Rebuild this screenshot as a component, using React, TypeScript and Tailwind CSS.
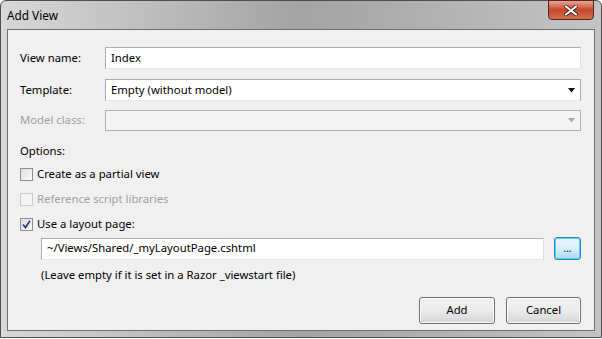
import React from "react";

const font = { fontFamily: '"Noto Sans", "Open Sans", sans-serif' };

function Arrow({ disabled }: { disabled?: boolean }) {
  return (
    <svg width="8" height="5" viewBox="0 0 8 5" className="mr-[4px]">
      <path d="M0 0 H7 L3.5 4.5 Z" fill={disabled ? "#a8a8a8" : "#111"} />
    </svg>
  );
}

function Check({ checked, disabled, label }: { checked?: boolean; disabled?: boolean; label: string }) {
  return (
    <div className="flex items-center h-[13px]">
      <div
        className={
          "w-[13px] h-[13px] border flex items-center justify-center " +
          (disabled ? "border-[#cbcbcb] bg-[#f4f4f4]" : "border-[#8e8f8f] bg-gradient-to-br from-[#dcdcdc] to-[#fbfbfb]")
        }
      >
        {checked && (
          <svg width="9" height="9" viewBox="0 0 9 9">
            <path d="M1 4.5 L3.5 7.5 L8 0.8" stroke="#2a3c8c" strokeWidth="1.8" fill="none" />
          </svg>
        )}
      </div>
      <span className={"ml-[4px] " + (disabled ? "text-[#a0a0a0]" : "text-black")}>{label}</span>
    </div>
  );
}

function Btn({ children, focus, w }: { children: React.ReactNode; focus?: boolean; w: string }) {
  return (
    <div
      className={
        "h-full rounded-[3px] border flex items-center justify-center text-black " +
        w +
        (focus
          ? " border-[#3c7fb1] shadow-[inset_0_0_0_1px_#48d7fb] bg-gradient-to-b from-[#eaf6fd] via-[#d9f0fc] to-[#a7d9f5]"
          : " border-[#707070] bg-gradient-to-b from-[#f2f2f2] via-[#ebebeb] to-[#d5d5d5] shadow-[inset_0_0_0_1px_#fcfcfc]")
      }
    >
      {children}
    </div>
  );
}

export default function App() {
  return (
    <div className="w-[602px] h-[339px] bg-white text-[11.3px]" style={font}>
      <div className="w-[602px] h-[338px] rounded-t-[6px] border border-[#4f4f4f] bg-gradient-to-r from-[#d8d8d8] via-[#a3a3a3] to-[#c4c4c4] flex flex-col">
        {/* title bar */}
        <div className="h-[28px] flex items-start justify-between">
          <div className="pl-[6px] pt-[6px] text-[11.8px] text-black">Add View</div>
          <div className="mr-[7px] mt-[-1px] w-[46px] h-[20px] rounded-b-[4px] border border-[#5a2520] bg-gradient-to-b from-[#e8a493] via-[#c7452c] to-[#d2704f] flex items-center justify-center">
            <svg width="14" height="11" viewBox="0 0 14 11">
              <path d="M2 1.5 L12 9.5 M12 1.5 L2 9.5" stroke="#3a1a14" strokeWidth="3.6" strokeLinecap="round" />
              <path d="M2 1.5 L12 9.5 M12 1.5 L2 9.5" stroke="#ffffff" strokeWidth="2.2" strokeLinecap="round" />
            </svg>
          </div>
        </div>

        {/* client panel */}
        <div className="mx-[6px] mb-[6px] flex-1 border border-[#6f6f6f] bg-[#f0f0f0] pl-[12px] pr-[13px] pt-[17px] text-black">
          <div className="flex items-center h-[22px]">
            <div className="w-[85px]">View name:</div>
            <div className="flex-1 h-full bg-white border border-[#abadb3] border-b-[#e3e9ef] border-r-[#dbdfe6] flex items-center pl-[5px]">
              Index
            </div>
          </div>
          <div className="flex items-center h-[22px] mt-[10px]">
            <div className="w-[85px]">Template:</div>
            <div className="flex-1 h-full bg-white border border-[#acacac] border-b-[#e3e9ef] flex items-center justify-between pl-[5px]">
              <span>Empty (without model)</span>
              <Arrow />
            </div>
          </div>
          <div className="flex items-center h-[21px] mt-[9px]">
            <div className="w-[85px] text-[#a0a0a0]">Model class:</div>
            <div className="flex-1 h-full bg-[#f4f4f4] border border-[#adb2b5] flex items-center justify-end">
              <Arrow disabled />
            </div>
          </div>

          <div className="mt-[12px] h-[16px] flex items-center">Options:</div>
          <div className="mt-[9px] flex flex-col gap-[12px]">
            <Check label="Create as a partial view" />
            <Check disabled label="Reference script libraries" />
            <Check checked label="Use a layout page:" />
          </div>

          <div className="mt-[6px] flex items-center h-[23px] pl-[21px]">
            <div className="flex-1 h-[22px] bg-white border border-[#abadb3] border-b-[#e3e9ef] border-r-[#dbdfe6] flex items-center pl-[5px]">
              ~/Views/Shared/_myLayoutPage.cshtml
            </div>
            <div className="ml-[10px] h-full">
              <Btn focus w="w-[27px]">
                <span className="text-[10px] leading-none pb-[2px]">...</span>
              </Btn>
            </div>
          </div>
          <div className="mt-[7px] pl-[21px] h-[16px] flex items-center">
            (Leave empty if it is set in a Razor _viewstart file)
          </div>

          <div className="mt-[14px] flex justify-end gap-[11px] h-[27px]">
            <Btn w="w-[76px]">Add</Btn>
            <Btn w="w-[75px]">Cancel</Btn>
          </div>
        </div>
      </div>
    </div>
  );
}
